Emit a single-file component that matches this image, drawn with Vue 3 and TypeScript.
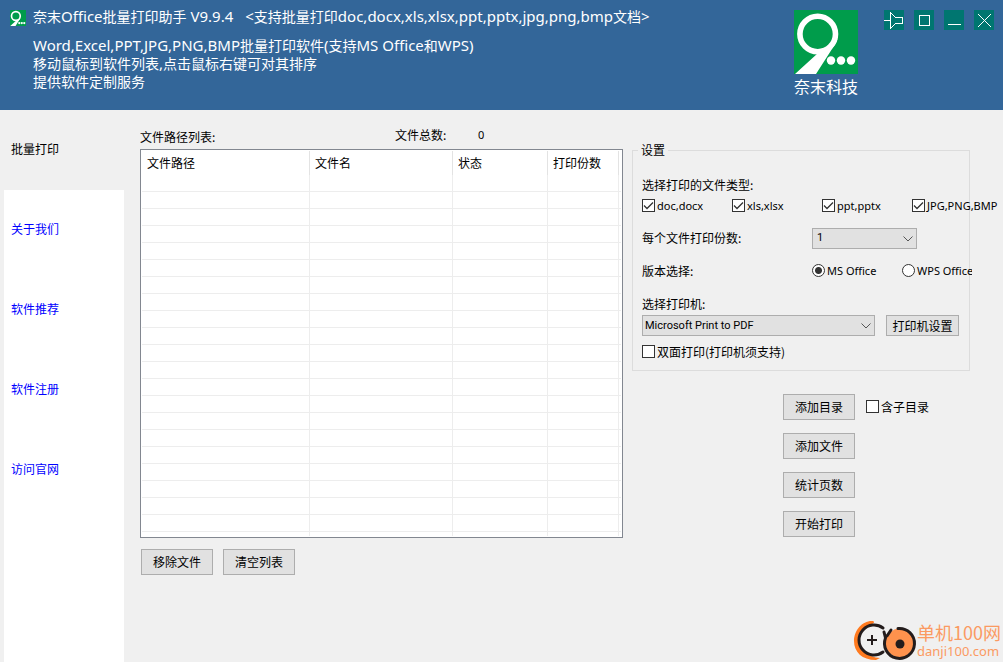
<script setup lang="ts">
import { ref } from 'vue'

interface Run {
  text: string
  latin: boolean
}

// Splits mixed text so that Latin runs can be set slightly larger than Chinese ones.
function runs(text: string): Run[] {
  return (text.match(/[\x20-\x7e]+|[^\x20-\x7e]+/g) ?? []).map((t) => ({
    text: t,
    latin: /^[\x20-\x7e]/.test(t),
  }))
}

const titleParts: Run[][] = [
  runs('奈末Office批量打印助手 V9.9.4'),
  runs('<支持批量打印doc,docx,xls,xlsx,ppt,pptx,jpg,png,bmp文档>'),
]
const notes: Run[][] = [
  runs('Word,Excel,PPT,JPG,PNG,BMP批量打印软件(支持MS Office和WPS)'),
  runs('移动鼠标到软件列表,点击鼠标右键可对其排序'),
  runs('提供软件定制服务'),
]

const navItems: string[] = ['批量打印', '关于我们', '软件推荐', '软件注册', '访问官网']
const activeNav = ref<number>(0)

const columns: string[] = ['文件路径', '文件名', '状态', '打印份数']
const rowCount = 21

interface FileType {
  id: string
  label: string
  checked: boolean
}
const fileTypes = ref<FileType[]>([
  { id: 'doc', label: 'doc,docx', checked: true },
  { id: 'xls', label: 'xls,xlsx', checked: true },
  { id: 'ppt', label: 'ppt,pptx', checked: true },
  { id: 'img', label: 'JPG,PNG,BMP', checked: true },
])

const copies = ref<string>('1')
const office = ref<string>('ms')
const printer = ref<string>('Microsoft Print to PDF')
const duplex = ref<boolean>(false)
const includeSub = ref<boolean>(false)
const fileTotal = ref<number>(0)
const actions: string[] = ['添加目录', '添加文件', '统计页数', '开始打印']
</script>

<template>
  <div class="window">
    <header class="titlebar">
      <svg class="app-icon" viewBox="0 0 64 64" aria-hidden="true">
        <rect width="64" height="64" fill="#009c4b" />
        <path d="M1 64 L23 44 L42 32 L22 64 Z" fill="#fff" />
        <circle cx="23.5" cy="24" r="17.5" fill="#009c4b" stroke="#fff" stroke-width="6.5" />
        <circle cx="37" cy="52" r="4.5" fill="#fff" />
        <circle cx="47" cy="52" r="4.5" fill="#fff" />
        <circle cx="57" cy="52" r="4.5" fill="#fff" />
      </svg>
      <div class="heading">
        <h1>
          <span v-for="(part, i) in titleParts" :key="i"><span v-for="(r, j) in part" :key="j" :class="{ roman: r.latin }">{{ r.text }}</span></span>
        </h1>
        <p v-for="(note, i) in notes" :key="i"><span v-for="(r, j) in note" :key="j" :class="{ roman: r.latin }">{{ r.text }}</span></p>
      </div>
      <div class="brand">
        <svg viewBox="0 0 64 64" width="64" height="64" aria-hidden="true">
          <rect width="64" height="64" fill="#009c4b" />
          <path d="M1 64 L23.5 43.5 L30 36 L43.5 29 C42 33 40 36 38 39 L22 64 Z" fill="#fff" />
          <circle cx="23.7" cy="24" r="17.8" fill="#009c4b" stroke="#fff" stroke-width="5.6" />
          <circle cx="37" cy="50.5" r="4.2" fill="#fff" />
          <circle cx="47" cy="50.5" r="4.2" fill="#fff" />
          <circle cx="57" cy="50.5" r="4.2" fill="#fff" />
        </svg>
        <span>奈末科技</span>
      </div>
      <div class="controls">
        <button type="button" aria-label="置顶">
          <svg viewBox="0 0 20 20"><path d="M0 10.5H6.5M6.5 2V19M6.5 2.5L11.5 7.5H18.5V13.5H11.5L6.5 18.5" /></svg>
        </button>
        <button type="button" aria-label="最大化">
          <svg viewBox="0 0 20 20"><path d="M5.5 5.5H15.5V15.5H5.5Z" /></svg>
        </button>
        <button type="button" aria-label="最小化">
          <svg viewBox="0 0 20 20"><path d="M4 14.5H17" /></svg>
        </button>
        <button type="button" aria-label="关闭">
          <svg viewBox="0 0 20 20"><path d="M4 4L17 17M17 4L4 17" /></svg>
        </button>
      </div>
    </header>

    <div class="body">
      <nav class="sidebar">
        <a
          v-for="(item, i) in navItems"
          :key="item"
          href="#"
          :class="{ active: i === activeNav }"
          @click.prevent="activeNav = i"
        >{{ item }}</a>
      </nav>

      <main class="content">
        <section class="files">
          <div class="files-head">
            <span class="path-label">文件路径列表:</span>
            <span class="total">文件总数:</span>
            <output>{{ fileTotal }}</output>
          </div>
          <div class="list">
            <table>
              <colgroup>
                <col class="c-path" />
                <col class="c-name" />
                <col class="c-state" />
                <col class="c-copies" />
                <col />
              </colgroup>
              <thead>
                <tr>
                  <th v-for="c in columns" :key="c" scope="col">{{ c }}</th>
                  <td></td>
                </tr>
              </thead>
              <tbody>
                <tr v-for="r in rowCount" :key="r">
                  <td v-for="n in 5" :key="n"></td>
                </tr>
                <tr class="rest">
                  <td v-for="n in 5" :key="n"></td>
                </tr>
              </tbody>
            </table>
          </div>
          <div class="list-actions">
            <button type="button" class="btn">移除文件</button>
            <button type="button" class="btn">清空列表</button>
          </div>
        </section>

        <section class="side">
          <fieldset>
            <legend>设置</legend>
            <div class="line">选择打印的文件类型:</div>
            <div class="types">
              <label v-for="t in fileTypes" :key="t.id" class="opt latin">
                <input v-model="t.checked" type="checkbox" />{{ t.label }}
              </label>
            </div>
            <div class="pair copies">
              <label for="copies">每个文件打印份数:</label>
              <div class="select">
                <select id="copies" v-model="copies">
                  <option>1</option>
                  <option>2</option>
                  <option>3</option>
                </select>
                <svg viewBox="0 0 10 6"><path d="M0.5 0.5L5 5L9.5 0.5" /></svg>
              </div>
            </div>
            <div class="pair version">
              <span>版本选择:</span>
              <div class="radios">
                <label class="opt latin"><input v-model="office" type="radio" name="office" value="ms" />MS Office</label>
                <label class="opt latin"><input v-model="office" type="radio" name="office" value="wps" />WPS Office</label>
              </div>
            </div>
            <label class="printer-label" for="printer">选择打印机:</label>
            <div class="printer">
              <div class="select">
                <select id="printer" v-model="printer">
                  <option>Microsoft Print to PDF</option>
                </select>
                <svg viewBox="0 0 10 6"><path d="M0.5 0.5L5 5L9.5 0.5" /></svg>
              </div>
              <button type="button" class="btn">打印机设置</button>
            </div>
            <label class="opt duplex"><input v-model="duplex" type="checkbox" />双面打印(打印机须支持)</label>
          </fieldset>

          <div class="actions">
            <div v-for="(a, i) in actions" :key="a" class="action">
              <button type="button" class="btn">{{ a }}</button>
              <label v-if="i === 0" class="opt"><input v-model="includeSub" type="checkbox" />含子目录</label>
            </div>
          </div>
        </section>
      </main>
    </div>

    <div class="site-mark">
      <svg viewBox="0 0 64 44" width="64" height="44" aria-hidden="true">
        <path d="M20 3C10 2 1 12 1 23C1 34 9 42 23 42L27 40C15 39 7 33 6 24C5 15 10 9 19 6C21 5 22 4 20 3Z" fill="#ff7a1f" />
        <path d="M30 10A15 15 0 1 0 30 34" fill="none" stroke="#231c1c" stroke-width="3" stroke-linecap="round" />
        <path d="M14 22H24M19 17V27" stroke="#231c1c" stroke-width="2" />
        <circle cx="47" cy="25" r="14.5" fill="#ff924d" />
        <path d="M45 10.5A15 15 0 1 1 32.5 20L31 14M34 18L38 12" fill="none" stroke="#231c1c" stroke-width="3" stroke-linecap="round" />
        <circle cx="47" cy="26" r="4.5" fill="#231c1c" />
      </svg>
      <div class="mark-text">
        <strong>单机100网</strong>
        <span>danji100.com</span>
      </div>
    </div>
  </div>
</template>

<style>
body {
  margin: 0;
  background: #f0f0f0;
}
</style>

<style scoped>
* {
  box-sizing: border-box;
}
.window {
  position: relative;
  display: flex;
  flex-direction: column;
  min-height: 100vh;
  background: #f0f0f0;
  color: #000;
  font: 12px/16px "Noto Sans CJK SC", sans-serif;
  overflow: hidden;
}
button,
select,
input {
  margin: 0;
  font: inherit;
  color: inherit;
}
.titlebar {
  display: flex;
  align-items: flex-start;
  height: 110px;
  padding: 8px 9px 0 10px;
  background: #336699;
  color: #fff;
}
.app-icon {
  flex: none;
  width: 16px;
  height: 16px;
  margin-top: 2px;
}
.heading {
  flex: 1;
  padding-left: 7px;
  font: 14px/18px "Noto Sans", "Noto Sans CJK SC", sans-serif;
  white-space: nowrap;
}
.heading h1 {
  display: flex;
  gap: 12px;
  margin: 0 0 12px;
  font-size: 14px;
  line-height: 17px;
  font-weight: 400;
}
.heading p {
  margin: 0;
}
.roman {
  font-size: 15px;
  line-height: 16px;
  white-space: pre;
}
.brand {
  display: flex;
  flex-direction: column;
  align-items: center;
  margin: 2px 26px 0 0;
  font: 16px/24px "Noto Sans CJK SC", sans-serif;
}
.brand svg {
  display: block;
}
.controls {
  display: flex;
  gap: 10px;
  margin-top: 2px;
}
.controls button {
  width: 20px;
  height: 20px;
  padding: 0;
  border: 0;
  background: #007670;
}
.controls svg {
  display: block;
  width: 20px;
  height: 20px;
  fill: none;
  stroke: #fff;
  stroke-width: 1;
  shape-rendering: crispEdges;
}
.body {
  flex: 1;
  display: flex;
}
.sidebar {
  display: flex;
  flex-direction: column;
  width: 120px;
  margin-left: 4px;
  background: #fff;
  font-family: "Liberation Sans", "Noto Sans CJK SC", sans-serif;
}
.sidebar a {
  display: flex;
  align-items: center;
  height: 80px;
  padding-left: 7px;
  color: #00f;
  text-decoration: none;
}
.sidebar a.active {
  background: #f0f0f0;
  color: #000;
}
.content {
  flex: 1;
  display: flex;
  gap: 9px;
  align-items: flex-start;
  padding: 17px 33px 0 16px;
}
.files {
  flex: 1;
}
.files-head {
  display: flex;
  height: 22px;
  line-height: 20px;
}
.path-label {
  width: 255px;
}
.total {
  width: 83px;
  line-height: 16px;
}
.files-head output {
  font: 11px/16px "Noto Sans", sans-serif;
}
.list {
  padding: 1px;
  border: 1px solid #828790;
  background: #fff;
}
table {
  width: 100%;
  table-layout: fixed;
  border-collapse: separate;
  border-spacing: 0;
}
.c-path {
  width: 168px;
}
.c-name {
  width: 143px;
}
.c-state {
  width: 95px;
}
.c-copies {
  width: 71px;
}
th,
td {
  height: 17px;
  padding: 0;
  border-right: 1px solid #ededed;
  border-bottom: 1px solid #ededed;
}
th {
  height: 24px;
  padding-left: 5px;
  border-right-color: #e3e3e3;
  border-bottom: 0;
  font-weight: 400;
  text-align: left;
}
thead td {
  border-bottom: 0;
}
tr td:last-child {
  border-right: 0;
}
.rest td {
  height: 4px;
  border-bottom: 0;
}
.list-actions {
  display: flex;
  gap: 10px;
  padding: 11px 1px 0;
}
.btn {
  width: 72px;
  height: 26px;
  padding: 0;
  border: 1px solid #adadad;
  background: #e1e1e1;
  white-space: nowrap;
}
.side {
  width: 338px;
  padding-top: 15px;
}
fieldset {
  min-width: 0;
  margin: 0;
  padding: 19px 0 10px 9px;
  border: 1px solid #dcdcdc;
}
legend {
  margin-left: -4px;
  padding: 0 3px;
}
.types {
  display: grid;
  grid-template-columns: repeat(4, 90px);
  margin-top: 5px;
}
.opt {
  display: flex;
  align-items: flex-start;
  gap: 2px;
  height: 16px;
  white-space: nowrap;
}
.latin {
  font: 11px/16px "Noto Sans", sans-serif;
}
.opt input {
  flex: none;
  appearance: none;
  width: 13px;
  height: 13px;
  margin-top: 1px;
  border: 1px solid #333;
  background: #fff center / 11px 11px no-repeat;
}
.opt input[type="checkbox"]:checked {
  background-image: url("data:image/svg+xml,%3Csvg xmlns='http://www.w3.org/2000/svg' viewBox='0 0 11 11'%3E%3Cpath d='M1 5.5L4 8.5L10 2.5' fill='none' stroke='%23333' stroke-width='1.3'/%3E%3C/svg%3E");
}
.opt input[type="radio"] {
  border-radius: 50%;
}
.opt input[type="radio"]:checked {
  background-image: radial-gradient(circle, #333 3px, transparent 4px);
}
.pair {
  display: grid;
  grid-template-columns: 170px 1fr;
  align-items: center;
}
.copies {
  height: 24px;
  margin-top: 12px;
}
.copies .select {
  width: 105px;
}
.version {
  margin-top: 13px;
}
.radios {
  display: grid;
  grid-template-columns: 90px 70px;
}
.radios .opt {
  overflow: hidden;
}
.select {
  position: relative;
}
.select select {
  display: block;
  appearance: none;
  width: 100%;
  height: 21px;
  padding: 0 18px 0 2px;
  border: 1px solid #adadad;
  border-radius: 0;
  background: #e1e1e1;
  font: 11px/16px Roboto, "Noto Sans", sans-serif;
}
.copies select {
  padding-left: 4px;
}
.select svg {
  position: absolute;
  top: 8px;
  right: 4px;
  width: 10px;
  height: 6px;
  fill: none;
  stroke: #555;
  pointer-events: none;
}
.printer-label {
  display: block;
  margin-top: 17px;
}
.printer {
  display: flex;
  gap: 11px;
  margin-top: 3px;
}
.printer .select {
  width: 233px;
}
.printer .btn {
  width: 73px;
  height: 21px;
}
.duplex {
  margin-top: 8px;
}
.actions {
  display: flex;
  flex-direction: column;
  gap: 13px;
  padding: 23px 0 0 151px;
}
.action {
  display: flex;
  align-items: center;
  gap: 11px;
}
.site-mark {
  position: absolute;
  right: 2px;
  bottom: 0;
  display: flex;
  align-items: center;
  color: #fb9a62;
}
.mark-text {
  display: flex;
  flex-direction: column;
  font: 13px/16px "Noto Sans", sans-serif;
}
.mark-text strong {
  font-family: "Noto Sans CJK SC", sans-serif;
  font-size: 18px;
  line-height: 22px;
  font-weight: 400;
}
</style>
